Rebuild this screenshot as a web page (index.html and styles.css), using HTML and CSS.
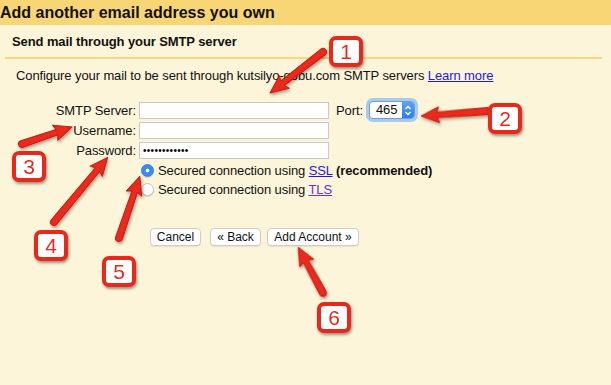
FILE: index.html
```html
<!DOCTYPE html>
<html>

<head>
    <title>Add another email address you own</title>
    <link rel="stylesheet" href="styles.css">
</head>

<body>
    <div class="header">Add another email address you own</div>

    <div class="panel">
        <div class="section-title">Send mail through your SMTP server</div>

        <p class="intro">Configure your mail to be sent through kutsilyo-gobu.com SMTP servers <a href="#">Learn more</a></p>

        <div class="form">
            <label class="field-label" for="server">SMTP Server:</label>
            <input type="text" class="input-box" id="server">
            <div class="port">
                <span>Port:</span>
                <div class="port-select">
                    <span class="port-value">465</span>
                    <span class="stepper">
                        <svg width="8" height="11" viewBox="0 0 8 11">
                            <path d="M1.5 4 L4 1.5 L6.5 4 M1.5 7 L4 9.5 L6.5 7" fill="none" stroke="#fff" stroke-width="1.3"/>
                        </svg>
                    </span>
                </div>
            </div>

            <label class="field-label" for="username">Username:</label>
            <input type="text" class="input-box" id="username">
            <div></div>

            <label class="field-label" for="password">Password:</label>
            <input type="password" class="input-box password" id="password" value="secretpasswd">
            <div></div>
        </div>

        <div class="security">
            <label class="radio-row">
                <input type="radio" name="security" checked>
                <span>Secured connection using <a href="#">SSL</a> <b>(recommended)</b></span>
            </label>
            <label class="radio-row">
                <input type="radio" name="security">
                <span>Secured connection using <a href="#" class="visited">TLS</a></span>
            </label>
        </div>

        <div class="buttons">
            <button class="btn btn-cancel">Cancel</button>
            <button class="btn btn-back">&laquo; Back</button>
            <button class="btn btn-add">Add Account &raquo;</button>
        </div>
    </div>

    <!-- annotation arrows -->
    <svg class="arrows" width="611" height="385" viewBox="0 0 611 385">
        <defs>
            <filter id="shadow" x="-20%" y="-20%" width="140%" height="140%">
                <feDropShadow dx="1" dy="2" stdDeviation="1.5" flood-color="#000" flood-opacity="0.35"/>
            </filter>
        </defs>
        <g fill="#e92a1c" stroke="#c41a10" stroke-width="1" stroke-linejoin="round" filter="url(#shadow)">
            <path transform="translate(323 52) rotate(142.3)" d="M0 -3.5 L51 -2.8 L49 -8 L67 0 L49 8 L51 2.8 L0 3.5 A3.5 3.5 0 0 1 0 -3.5 Z"/>
            <path transform="translate(488 111) rotate(175.7)" d="M0 -3.5 L51 -2.8 L49 -8 L67 0 L49 8 L51 2.8 L0 3.5 A3.5 3.5 0 0 1 0 -3.5 Z"/>
            <path transform="translate(22 144) rotate(-18.8)" d="M0 -3.5 L37 -2.8 L35 -8 L53 0 L35 8 L37 2.8 L0 3.5 A3.5 3.5 0 0 1 0 -3.5 Z"/>
            <path transform="translate(54 222) rotate(-50.3)" d="M0 -3.5 L68 -2.8 L66 -8 L84 0 L66 8 L68 2.8 L0 3.5 A3.5 3.5 0 0 1 0 -3.5 Z"/>
            <path transform="translate(119 238) rotate(-71.3)" d="M0 -3.5 L49 -2.8 L47 -8 L65 0 L47 8 L49 2.8 L0 3.5 A3.5 3.5 0 0 1 0 -3.5 Z"/>
            <path transform="translate(323 293) rotate(-118.5)" d="M0 -3.5 L36 -2.8 L34 -8 L52 0 L34 8 L36 2.8 L0 3.5 A3.5 3.5 0 0 1 0 -3.5 Z"/>
        </g>
    </svg>

    <div class="callout callout-1">1</div>
    <div class="callout callout-2">2</div>
    <div class="callout callout-3">3</div>
    <div class="callout callout-4">4</div>
    <div class="callout callout-5">5</div>
    <div class="callout callout-6">6</div>
</body>

</html>
```

FILE: styles.css
```css
body {
    font-family: "Liberation Sans", Arial, sans-serif;
    font-size: 13px;
    letter-spacing: -0.1px;
    color: #111;
    background-color: #fdf5d9;
    margin: 0;
    padding: 0;
    width: 611px;
    height: 385px;
    position: relative;
    overflow: hidden;
}

a {
    color: #1d1ae0;
}

a.visited {
    color: #6a2fd8;
}

.header {
    height: 25px;
    line-height: 25px;
    background-color: #f8d676;
    font-size: 16px;
    font-weight: bold;
    letter-spacing: 0;
    color: #111;
}

.panel {
    padding: 0 9px 0 5px;
}

.section-title {
    padding: 9px 7px 7px;
    line-height: 16px;
    font-weight: bold;
    border-bottom: 2px solid #f7d77f;
}

.intro {
    margin: 9px 0 0 11px;
    line-height: 16px;
}

/* SMTP fields */

.form {
    display: grid;
    grid-template-columns: 131px 190px auto;
    grid-auto-rows: 20px;
    column-gap: 3px;
    align-items: center;
    margin-top: 16px;
}

.field-label {
    text-align: right;
}

.input-box {
    box-sizing: border-box;
    width: 190px;
    height: 17px;
    margin: 0;
    padding: 0 3px;
    border: 1px solid #c9c9c9;
    background: #fff;
    font-family: inherit;
    font-size: 13px;
    outline: none;
}

.password {
    font-size: 10px;
    letter-spacing: 0.3px;
}

.port {
    display: flex;
    align-items: center;
    margin-left: 4px;
}

.port-select {
    display: flex;
    align-items: stretch;
    box-sizing: border-box;
    width: 46px;
    height: 18px;
    margin-left: 6px;
    border: 1px solid #6d9fd8;
    border-radius: 4px;
    background: #fff;
    box-shadow: 0 0 0 3px #a9c9ef;
    overflow: hidden;
}

.port-value {
    flex: 1;
    padding-left: 6px;
    line-height: 16px;
}

.stepper {
    width: 12px;
    display: flex;
    align-items: center;
    justify-content: center;
    background: linear-gradient(#5aa2f3, #2b7fe8);
}

/* security radios */

.security {
    margin: 1px 0 0 136px;
}

.radio-row {
    display: flex;
    align-items: center;
    height: 19px;
}

.radio-row input {
    appearance: none;
    -webkit-appearance: none;
    box-sizing: border-box;
    width: 13px;
    height: 13px;
    margin: 0 4px 0 0;
    border-radius: 50%;
    border: 1px solid #c3c3c3;
    background: #fff;
    box-shadow: 0 1px 1px rgba(0, 0, 0, 0.15);
}

.radio-row input:checked {
    border-color: #2f7fe2;
    background: radial-gradient(circle, #fff 0, #fff 1.6px, #3a8cf0 2.2px);
}

/* buttons */

.buttons {
    display: flex;
    margin: 29px 0 0 145px;
}

.btn {
    box-sizing: border-box;
    height: 18px;
    margin: 0 9px 0 0;
    padding: 0;
    border: 1px solid #cdcdcd;
    border-radius: 4px;
    background: #fff;
    font-family: inherit;
    font-size: 12px;
    color: #111;
    box-shadow: 0 1px 1px rgba(0, 0, 0, 0.08);
}

.btn-cancel { width: 51px; }
.btn-back { width: 51px; margin-right: 6px; }
.btn-add { width: 92px; }

/* annotations */

.arrows {
    position: absolute;
    left: 0;
    top: 0;
    pointer-events: none;
}

.callout {
    position: absolute;
    box-sizing: border-box;
    width: 34px;
    height: 31px;
    border: 4px solid #e8281a;
    border-radius: 7px;
    background: #fff;
    color: #e8281a;
    font-family: "Liberation Sans", Arial, sans-serif;
    font-size: 21px;
    letter-spacing: 0;
    line-height: 23px;
    text-align: center;
    box-shadow: 1px 2px 3px rgba(0, 0, 0, 0.4);
}

.callout-1 { left: 329px; top: 36px; }
.callout-2 { left: 488px; top: 103px; }
.callout-3 { left: 12px; top: 151px; }
.callout-4 { left: 34px; top: 230px; }
.callout-5 { left: 102px; top: 256px; }
.callout-6 { left: 317px; top: 302px; }
```
